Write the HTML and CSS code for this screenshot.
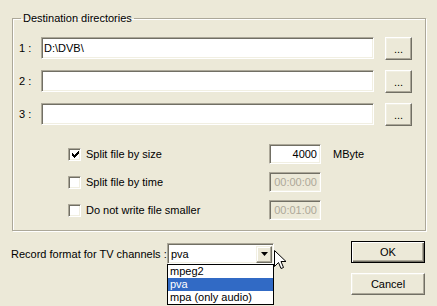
FILE: index.html
```html
<!DOCTYPE html>
<html lang="en">
<head>
  <meta charset="UTF-8" />
  <title>Recording options</title>
  <link rel="stylesheet" href="styles.css">
</head>
<body>
  <div class="dialog">
    <fieldset class="group">
      <legend>Destination directories</legend>

      <div class="dir-row">
        <label>1 :</label>
        <input class="field" type="text" value="D:\DVB\" />
        <button class="btn small">...</button>
      </div>
      <div class="dir-row">
        <label>2 :</label>
        <input class="field" type="text" value="" />
        <button class="btn small">...</button>
      </div>
      <div class="dir-row">
        <label>3 :</label>
        <input class="field" type="text" value="" />
        <button class="btn small">...</button>
      </div>

      <div class="splits">
        <div class="split-row">
          <span class="check checked">
            <svg width="7" height="7" viewBox="0 0 7 7"><path d="M0 2h1v1h1v1h1V3h1V2h1V1h1V0h1v3H6v1H5v1H4v1H3v1H2V6H1V5H0z" fill="#000"/></svg>
          </span>
          <span class="split-label">Split file by size</span>
          <input class="field num" type="text" value="4000" />
          <span class="unit">MByte</span>
        </div>
        <div class="split-row">
          <span class="check"></span>
          <span class="split-label">Split file by time</span>
          <input class="field num off" type="text" value="00:00:00" disabled />
        </div>
        <div class="split-row">
          <span class="check"></span>
          <span class="split-label">Do not write file smaller</span>
          <input class="field num off" type="text" value="00:01:00" disabled />
        </div>
      </div>
    </fieldset>

    <div class="bottom">
      <div class="format">
        <span class="format-label">Record format for TV channels :</span>
        <div class="combo">
          <span class="combo-value">pva</span>
          <span class="combo-arrow">
            <svg width="7" height="4" viewBox="0 0 7 4"><path d="M0 0h7L3.5 4z" fill="#000"/></svg>
          </span>
          <ul class="combo-list">
            <li>mpeg2</li>
            <li class="selected">pva</li>
            <li>mpa (only audio)</li>
          </ul>
          <svg class="cursor" width="12" height="20" viewBox="0 0 12 20">
            <path d="M0.5 0.5v16l4-4 2.5 6 2.5-1-2.5-6h5z" fill="#fff" stroke="#000" stroke-width="1"/>
          </svg>
        </div>
      </div>
      <div class="actions">
        <button class="btn default">OK</button>
        <button class="btn">Cancel</button>
      </div>
    </div>
  </div>
</body>
</html>
```

FILE: styles.css
```css
body {
  margin: 0;
  background-color: #ece9d8;
  font-family: 'Liberation Sans', Arial, sans-serif;
  font-size: 11px;
  color: #000;
}
.dialog {
  width: 437px;
  height: 306px;
  box-sizing: border-box;
  padding: 11px 11px 0 12px;
}
.group {
  margin: 0;
  width: 414px;
  box-sizing: border-box;
  padding: 12px 13px 10px 6px;
  border: 1px solid #aca899;
  box-shadow: inset 1px 1px #fff, 1px 1px #fff;
}
.group legend {
  margin-left: 2px;
  padding: 0 2px;
  line-height: 14px;
}
.dir-row {
  display: grid;
  grid-template-columns: 22px 1fr 38px;
  align-items: start;
  height: 23px;
  margin-bottom: 10px;
}
.dir-row label {
  line-height: 22px;
}
.dir-row .btn {
  justify-self: end;
}
.dir-row:nth-child(4) {
  margin-bottom: 0;
}
.field {
  box-sizing: border-box;
  height: 22px;
  margin: 0;
  padding: 0 2px;
  border: 1px solid;
  border-color: #aca899 #fff #fff #aca899;
  box-shadow: inset 1px 1px #716f64, inset -1px -1px #f1efe2;
  background: #fff;
  font: inherit;
  color: #000;
  outline: none;
}
.btn {
  box-sizing: border-box;
  height: 23px;
  margin: 0;
  padding: 0;
  border: 1px solid;
  border-color: #fff #716f64 #716f64 #fff;
  box-shadow: inset -1px -1px #aca899, inset 1px 1px #f1efe2;
  background: #ece9d8;
  font: inherit;
  color: #000;
}
.btn.small {
  width: 27px;
  line-height: 18px;
}
.splits {
  margin-top: 18px;
  display: flex;
  flex-direction: column;
  gap: 8px;
}
.split-row {
  display: flex;
  align-items: center;
  height: 20px;
  padding-left: 49px;
}
.check {
  box-sizing: border-box;
  width: 13px;
  height: 13px;
  border: 1px solid;
  border-color: #aca899 #fff #fff #aca899;
  box-shadow: inset 1px 1px #716f64, inset -1px -1px #f1efe2;
  background: #fff;
  display: flex;
  align-items: center;
  justify-content: center;
  padding: 1px 0 0 1px;
}
.split-label {
  width: 183px;
  margin-left: 5px;
}
.field.num {
  width: 52px;
  height: 20px;
  text-align: right;
  padding-right: 3px;
}
.field.off {
  background: #ece9d8;
  color: #aca899;
  -webkit-text-fill-color: #aca899;
}
.unit {
  margin-left: 12px;
}
.bottom {
  display: flex;
  justify-content: space-between;
  margin-top: 10px;
  margin-left: -1px;
}
.format {
  display: flex;
  align-items: center;
  height: 21px;
  margin-top: 2px;
}
.format-label {
  width: 156px;
}
.combo {
  position: relative;
  box-sizing: border-box;
  width: 107px;
  height: 21px;
  border: 1px solid;
  border-color: #aca899 #fff #fff #aca899;
  box-shadow: inset 1px 1px #716f64, inset -1px -1px #f1efe2;
  background: #fff;
  display: flex;
  align-items: center;
  justify-content: space-between;
  padding: 2px 1px 1px 3px;
}
.combo-arrow {
  box-sizing: border-box;
  width: 16px;
  height: 17px;
  border: 1px solid;
  border-color: #f1efe2 #716f64 #716f64 #f1efe2;
  box-shadow: inset -1px -1px #aca899, inset 1px 1px #fff;
  background: #ece9d8;
  display: flex;
  align-items: center;
  justify-content: center;
}
.combo-list {
  position: absolute;
  left: -1px;
  top: 20px;
  width: 107px;
  box-sizing: border-box;
  margin: 0;
  padding: 0;
  list-style: none;
  border: 1px solid #000;
  background: #fff;
}
.combo-list li {
  line-height: 13px;
  padding-left: 2px;
}
.combo-list .selected {
  background: #316ac5;
  color: #fff;
}
.cursor {
  position: absolute;
  left: 106px;
  top: 6px;
}
.actions {
  display: flex;
  flex-direction: column;
  gap: 10px;
  margin-right: 1px;
}
.actions .btn {
  width: 74px;
  height: 22px;
}
.btn.default {
  border-color: #000;
  box-shadow: inset 1px 1px #fff, inset -1px -1px #716f64, inset -2px -2px #aca899;
}
```
